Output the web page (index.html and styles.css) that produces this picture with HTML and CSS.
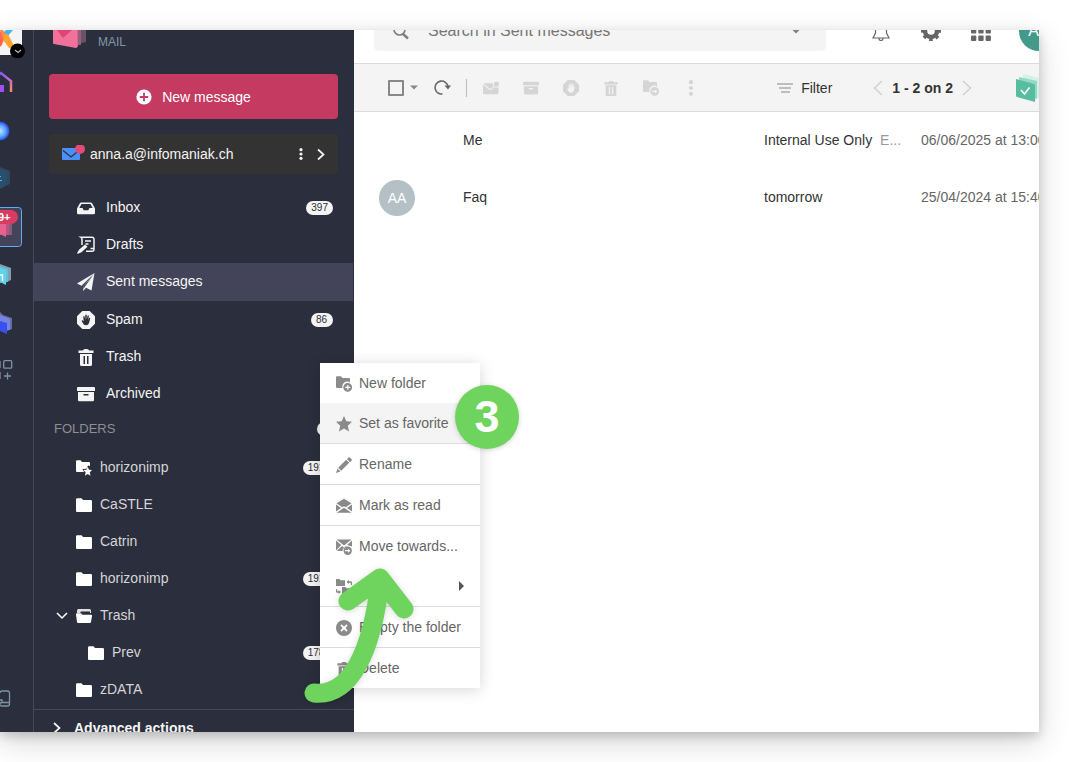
FILE: index.html
```html
<!DOCTYPE html>
<html lang="en">
<head>
<meta charset="utf-8">
<meta name="viewport" content="width=device-width, initial-scale=1">
<title>Mail - Sent messages</title>
<link rel="stylesheet" href="styles.css">
</head>
<body>
<svg class="sprite" aria-hidden="true">
  <symbol id="i-inbox" viewBox="0 0 18 18"><path fill-rule="evenodd" d="M4.200 3.500h9.600a1.500 1.500 0 0 1 1.300.8L18 9.500V14a1.300 1.300 0 0 1-1.300 1.300H1.300A1.300 1.300 0 0 1 0 14V9.500l2.900-5.200a1.500 1.500 0 0 1 1.300-.8zM4.500 5 2.300 9H5.500l1.200 2.200h4.600L12.500 9h3.200L13.500 5z"/></symbol>
  <symbol id="i-draft" viewBox="0 0 18 18"><path fill="none" stroke="currentColor" stroke-width="1.500" d="M5 9V3.500A2.500 2.500 0 0 0 3.800 1.200H15A2 2 0 0 1 17 3V13.500a1.800 1.800 0 0 1-1.800 1.800H9M17 12.500H13.500M8 5h6M8.500 8h3"/><path d="M8 8.500 10.500 10.800 4.500 16.200 1 17.800 0 17.200 2 13.800z"/></symbol>
  <symbol id="i-send" viewBox="0 0 18 18"><path d="M17.500 0 0 10.500l4.500 2.200zM17.500 0 6 13.500 6.300 18 9 14.800 14.500 17.500zM16 2.500 8 13.500l-1.600 2.500-.3-2.500z"/></symbol>
  <symbol id="i-spam" viewBox="0 0 18 18"><path d="M5.300 0h7.400L18 5.300v7.400L12.700 18H5.300L0 12.700V5.300z"/><path class="hand" d="M4.800 10.200c-.4-.8.500-1.400 1.100-.8l.8.900-.4-4.500c0-.9 1.100-1 1.300-.1l.6 3L8.300 4.300c0-1 1.300-1 1.400 0l.1 4.300.7-3.700c.2-.9 1.400-.7 1.300.2l-.5 4.200.8-2.200c.4-.8 1.300-.4 1.100.4l-1.100 4.300c-.5 1.700-1.600 2.500-3.200 2.500-1.500 0-2.400-.8-2.900-2z"/></symbol>
  <symbol id="i-trash" viewBox="0 0 18 18"><path fill-rule="evenodd" d="M6 2.500C6 .5 12 .5 12 2.500h4.500V5h-15V2.500zM3 6h12v10.500a1.500 1.500 0 0 1-1.500 1.500h-9A1.500 1.500 0 0 1 3 16.500zM6.500 8v8H8V8zM10 8v8h1.500V8z"/></symbol>
  <symbol id="i-archive" viewBox="0 0 18 18"><path fill-rule="evenodd" d="M1 2h16a1 1 0 0 1 1 1v3H0V3a1 1 0 0 1 1-1zM1 7h16v8a1.300 1.300 0 0 1-1.300 1.300H2.300A1.300 1.300 0 0 1 1 15zM6.500 9v1.500h5V9z"/></symbol>
  <symbol id="i-folder" viewBox="0 0 16 16"><path d="M0 2.500A1.300 1.300 0 0 1 1.300 1.200H5.500L7 3h7.800A1.200 1.200 0 0 1 16 4.200V14a1 1 0 0 1-1 1H1a1 1 0 0 1-1-1z"/></symbol>
  <symbol id="i-folder-star" viewBox="0 0 16 16"><path d="M0 1.200A1 1 0 0 1 1 .2h3.500L6 2h7a1 1 0 0 1 1 1v3L12 5.500 10.500 8.800 6.500 9 8 12H1a1 1 0 0 1-1-1z"/><path d="m11.700 6.800 1.300 3 3 .3-2.200 2.100.7 3.600-2.800-1.800L9 15.800l.6-3.600-2.300-2.100 3.100-.3z"/></symbol>
  <symbol id="i-folder-open" viewBox="0 0 16 16"><path opacity=".85" d="M1 5V2.500A1.500 1.500 0 0 1 2.500 1h11A1.500 1.500 0 0 1 15 2.500V5h-1V3.500H5L4 5z"/><path d="M0 6.500A1 1 0 0 1 1 5.300h4l1.500 1.400H15a1 1 0 0 1 1 1.200L15 14a1.200 1.200 0 0 1-1.200 1H2.200A1.200 1.200 0 0 1 1 14z"/></symbol>
  <symbol id="i-folder-plus" viewBox="0 0 16 16"><path fill-rule="evenodd" d="M0 1.200A1 1 0 0 1 1 .2h4L6.500 2H13a1 1 0 0 1 1 1v3.400A5 5 0 0 0 6.500 12H1a1 1 0 0 1-1-1zM11.700 7a4.300 4.300 0 1 1 0 8.800 4.300 4.300 0 0 1 0-8.800zM11.200 9v1.800H9.300v1.200h1.900v1.800h1.200V12h1.900v-1.200h-1.900V9z"/></symbol>
  <symbol id="i-folder-move" viewBox="0 0 16 16"><path fill-rule="evenodd" d="M0 1.200A1 1 0 0 1 1 .2h4L6.500 2H13a1 1 0 0 1 1 1v3.400A5 5 0 0 0 6.500 12H1a1 1 0 0 1-1-1zM11.700 7a4.300 4.300 0 1 1 0 8.800 4.300 4.300 0 0 1 0-8.800zM9 10.800V12h3v1.400l2.500-2L12 9.400v1.400z"/></symbol>
  <symbol id="i-mail-dot" viewBox="0 0 16 16"><path d="M0 4.500 6.500 10h1.300L11.300 7c1.200 1 2.900 1 4.200 0v6a1.300 1.300 0 0 1-1.300 1.300H1.300A1.300 1.300 0 0 1 0 13zM.3 3.300h9.500c-.2 1.200.1 2.100.8 3L7.200 9.200z"/><circle cx="13.500" cy="4.200" r="2.600"/></symbol>
  <symbol id="i-mail-move" viewBox="0 0 16 16"><path d="M.5.5h15L8 6.500zM0 1.500l5.200 4.600L0 11.500zM6 7l2 1.500L10 7l.8.700A5 5 0 0 0 6.500 12H.8zM11 6l5-4.500V7.500z"/><path fill-rule="evenodd" d="M11.700 7.500a4.200 4.200 0 1 1 0 8.400 4.200 4.200 0 0 1 0-8.400zM9 11v1.300h3v1.400l2.500-2L12 9.700V11z"/></symbol>
  <symbol id="i-mail-open" viewBox="0 0 16 16"><path d="M8 .8 15.500 5.300 9.800 9.200 8 8.200 6.200 9.200.5 5.300zM0 6.500l5 3.500-5 3.500zM16 6.500v7L11 10zM.5 14.800 8 9.800l7.500 5z"/></symbol>
  <symbol id="i-star" viewBox="0 0 16 16"><path d="m8 0 2.300 5.200 5.700.6-4.200 3.900L13 15.500 8 12.500l-5 3 1.200-5.800L0 5.800l5.700-.6z"/></symbol>
  <symbol id="i-pencil" viewBox="0 0 16 16"><path d="M10.200 2.800l3 3-8 8-3-3zM1.500 11.500l3 3L0 16z"/><path d="M12.200.8a1.500 1.500 0 0 1 2 0l1.200 1.200a1.500 1.500 0 0 1 0 2L14 5.200 11 2z"/></symbol>
  <symbol id="i-transfer" viewBox="0 0 16 16"><path d="M0 0h3.500l1 1.200H9V7H0zM6 8h3.500l1 1.200H15V15H6zM10.500 3 13 .8v1.500h2a1 1 0 0 1 1 1V6h-1.200V3.800H13V5zM5 13 2.500 15v-1.300H1a1 1 0 0 1-1-1V10h1.200v2.300h1.300V11z"/></symbol>
  <symbol id="i-cancel" viewBox="0 0 16 16"><circle cx="8" cy="8" r="8"/><path d="m5 5 6 6M11 5l-6 6" stroke="#fff" stroke-width="1.800"/></symbol>
  <symbol id="i-dots" viewBox="0 0 16 16"><circle cx="8" cy="2.200" r="2.100"/><circle cx="8" cy="8" r="2.100"/><circle cx="8" cy="13.800" r="2.100"/></symbol>
  <symbol id="i-caret" viewBox="0 0 8 5"><path d="M0 .5h8L4 4.500z"/></symbol>
  <symbol id="i-right" viewBox="0 0 10 12"><path d="m2 1 5.500 5L2 11" fill="none" stroke="currentColor" stroke-width="1.700"/></symbol>
</svg>

<div class="window">
  <nav class="rail" aria-label="Applications">
    <a class="rail-logo" href="#" aria-label="Workspace"><svg width="33" height="28" viewBox="0 0 33 28"><path fill="#f4f4f4" d="M0 0h22v25H0z"/><path fill="#45b5ee" d="M6 0h7L7 7 3 3z"/><path fill="#ff6a4d" d="M0 1 5 6 2 15 0 17z"/><path fill="#ff8a4a" d="M0 0h3l6 9-5 3z"/><path fill="#ffa52e" d="m4 5 4-1 7 14H9L4 11z"/><circle cx="17.500" cy="21" r="7.500" fill="#000"/><path d="m15 20 3 2.500 3-2.500" fill="none" stroke="#bbb" stroke-width="1.200"/></svg></a>
    <a class="rail-item" href="#" aria-label="Home"><svg width="33" height="48" viewBox="0 0 33 48"><defs><linearGradient id="gh" x1="0" x2="1" y1="0" y2="1"><stop stop-color="#6a4dff"/><stop offset=".5" stop-color="#a860f0"/><stop offset="1" stop-color="#ff8a5c"/></linearGradient></defs><path fill="none" stroke="url(#gh)" stroke-width="2.500" d="M-8 22 1 15l10 8v11"/><path fill="#a24df5" d="M0 27h4v7H0z"/></svg></a>
    <a class="rail-item" href="#" aria-label="Assistant"><svg width="33" height="48" viewBox="0 0 33 48"><defs><radialGradient id="gs"><stop stop-color="#bfe4ff"/><stop offset=".6" stop-color="#5aa5ff"/><stop offset="1" stop-color="#2746e0"/></radialGradient></defs><circle cx="0" cy="25" r="9.500" fill="url(#gs)"/></svg></a>
    <a class="rail-item" href="#" aria-label="Hosting"><svg width="33" height="48" viewBox="0 0 33 48"><path fill="#31475d" d="m0 13 10 4v13L0 35z"/><path fill="#26516e" d="m0 15 7 3v12l-7 4z"/><path fill="#8ba0b0" d="M0 22h1v1H0zM0 26h2v1H0z"/></svg></a>
    <a class="rail-item" href="#" aria-label="Mail"><svg width="33" height="48" viewBox="0 0 33 48"><rect x="-10" y="5.500" width="31.500" height="39" rx="3" fill="#434459" stroke="#64aaf5"/><path fill="#8a5a78" d="m0 18 12 3v12H0z"/><path fill="#b8557e" d="M0 18h9v15H0z"/><path fill="#e8628f" d="M0 22h6v13l-6-3z"/><rect x="-10" y="8" width="28" height="14" rx="7" fill="#d83c63"/><text x="-2" y="19" class="rail-count">9+</text></svg></a>
    <a class="rail-item" href="#" aria-label="Calendar"><svg width="33" height="48" viewBox="0 0 33 48"><path fill="#7f9fae" d="m0 14 11 4v12l-6 3H0z"/><path fill="#65bfd8" d="m0 16 8 3v13H0z"/><path fill="#62d2ee" d="m0 18 6 2v15l-6-3z"/><path d="M0 25h2.500v6" stroke="#fff" stroke-width="1.300" fill="none"/></svg></a>
    <a class="rail-item" href="#" aria-label="Drive"><svg width="33" height="48" viewBox="0 0 33 48"><path fill="#666e9e" d="m0 14 3 3 9 3v11l-5 2H0z"/><path fill="#7284e4" d="m0 17 10 4v11H0z"/><path fill="#3a50ee" d="m0 23 7 2v11l-7-3z"/></svg></a>
    <a class="rail-item" href="#" aria-label="All applications"><svg width="33" height="48" viewBox="0 0 33 48"><g fill="none" stroke="#7e93a3" stroke-width="1.300"><rect x="3.700" y="14.700" width="8" height="7.500" rx="1"/><path d="M0 15v7M0 26v7M7.500 26.500v7M4 30h7"/></g></svg></a>
    <a class="rail-bottom" href="#" aria-label="Documentation"><svg width="33" height="18" viewBox="0 0 33 18"><path fill="none" stroke="#7e93a3" stroke-width="1.300" d="M0 3a2 2 0 0 1 2-2h5.500a2 2 0 0 1 2 2v11a2 2 0 0 1-2 2H2c-3 0-3-3.500 0-3.500h7.500M0 10h2v3"/></svg></a>
  </nav>

  <aside class="sidebar">
    <header class="brand">
      <svg width="36" height="20" viewBox="0 0 36 20"><path fill="#665467" d="M20 0h14v12l-9 2z"/><path fill="#a05a7a" d="M20 0h9v15h-7z"/><path fill="#c86b8e" d="M20 0h6v17h-5z"/><path fill="#f0729b" d="M1 0h24v17q0 1-1 1L2 14q-1 0-1-1z"/><path fill="#dd4674" d="M5 0h15l-9 8z"/></svg>
      <span>MAIL</span>
    </header>
    <button class="compose" type="button"><svg width="16" height="16" viewBox="0 0 16 16"><circle cx="8" cy="8" r="7.600" fill="#fff"/><path d="M8 3.800v8.400M3.800 8h8.400" stroke="#c53a60" stroke-width="1.800"/></svg>New message</button>
    <div class="account">
      <svg width="24" height="18" viewBox="0 0 24 18"><path fill="#4a90ff" d="M1 4a1 1 0 0 1 1-1h16a1 1 0 0 1 1 1v10a1 1 0 0 1-1 1H2a1 1 0 0 1-1-1z"/><path d="m2 5.500 8 6.500 8-6.500" fill="none" stroke="#333" stroke-width="1.300"/><circle cx="19" cy="4" r="5" fill="#e24a78"/></svg>
      <span class="address">anna.a@infomaniak.ch</span>
      <button type="button" aria-label="Account options"><svg width="12" height="12"><use href="#i-dots"/></svg></button>
      <button type="button" aria-label="Switch account"><svg width="10" height="13"><use href="#i-right"/></svg></button>
    </div>
    <ul class="folders">
      <li><a href="#"><svg><use href="#i-inbox"/></svg>Inbox<span class="count">397</span></a></li>
      <li><a href="#"><svg><use href="#i-draft"/></svg>Drafts</a></li>
      <li class="current"><a href="#"><svg><use href="#i-send"/></svg>Sent messages</a></li>
      <li><a href="#"><svg><use href="#i-spam"/></svg>Spam<span class="count">86</span></a></li>
      <li><a href="#"><svg><use href="#i-trash"/></svg>Trash</a></li>
      <li><a href="#"><svg><use href="#i-archive"/></svg>Archived</a></li>
    </ul>
    <h2 class="section">FOLDERS<span class="count">8</span></h2>
    <ul class="folders custom">
      <li><a href="#"><svg><use href="#i-folder-star"/></svg>horizonimp<span class="count">1917</span></a></li>
      <li><a href="#"><svg><use href="#i-folder"/></svg>CaSTLE</a></li>
      <li><a href="#"><svg><use href="#i-folder"/></svg>Catrin</a></li>
      <li><a href="#"><svg><use href="#i-folder"/></svg>horizonimp<span class="count">1917</span></a></li>
      <li class="open"><a href="#"><svg class="chevron" viewBox="0 0 12 8"><path d="m1 1 5 5 5-5" fill="none" stroke="currentColor" stroke-width="1.500"/></svg><svg><use href="#i-folder-open"/></svg>Trash</a></li>
      <li class="nested"><a href="#"><svg><use href="#i-folder"/></svg>Prev<span class="count">1786</span></a></li>
      <li><a href="#"><svg><use href="#i-folder"/></svg>zDATA</a></li>
    </ul>
    <button class="advanced" type="button"><svg width="10" height="12"><use href="#i-right"/></svg>Advanced actions</button>
  </aside>

  <main class="main">
    <header class="topbar">
      <div class="search">
        <svg width="18" height="18" viewBox="0 0 18 18"><circle cx="7.500" cy="7.500" r="5.500" fill="none" stroke="currentColor" stroke-width="1.700"/><path d="m11 12 5 4.500" stroke="currentColor" stroke-width="2.500"/></svg>
        <input type="text" placeholder="Search in Sent messages" aria-label="Search in Sent messages">
        <svg class="search-caret" width="8" height="5"><use href="#i-caret"/></svg>
      </div>
      <div class="tools">
        <button type="button" aria-label="Notifications"><svg width="20" height="20" viewBox="0 0 20 20"><path fill="none" stroke="currentColor" stroke-width="1.200" d="M4.500 7a5.500 5.500 0 0 1 11 0v5l2.500 5H2l2.500-5zM8 17.500a2 2 0 0 0 4 0"/></svg></button>
        <button type="button" aria-label="Settings"><svg width="20" height="20" viewBox="0 0 20 20"><circle cx="10" cy="10" r="6" fill="none" stroke="currentColor" stroke-width="4.500"/><circle cx="10" cy="10" r="8.800" fill="none" stroke="currentColor" stroke-width="2.400" stroke-dasharray="3.700 3.210" stroke-dashoffset="1.850"/></svg></button>
        <button type="button" aria-label="Applications"><svg width="20" height="20" viewBox="0 0 20 20"><rect width="5.300" height="5.300" rx="1"/><rect x="7.300" width="5.300" height="5.300" rx="1"/><rect x="14.600" width="5.300" height="5.300" rx="1"/><rect y="7.300" width="5.300" height="5.300" rx="1"/><rect x="7.300" y="7.300" width="5.300" height="5.300" rx="1"/><rect x="14.600" y="7.300" width="5.300" height="5.300" rx="1"/><rect y="14.600" width="5.300" height="5.300" rx="1"/><rect x="7.300" y="14.600" width="5.300" height="5.300" rx="1"/><rect x="14.600" y="14.600" width="5.300" height="5.300" rx="1"/></svg></button>
      </div>
      <span class="profile">AA</span>
    </header>

    <div class="toolbar">
      <label class="select-all"><input type="checkbox" aria-label="Select all"><svg width="8" height="5"><use href="#i-caret"/></svg></label>
      <button class="refresh" type="button" aria-label="Refresh"><svg width="17" height="17" viewBox="0 0 17 17"><path fill="none" stroke="#666" stroke-width="1.600" d="M8.500 15a6.500 6.500 0 1 1 5.500-7.500"/><path fill="#666" d="M10.500 6.500H17L14 10.500z"/></svg></button>
      <div class="actions">
        <button type="button" aria-label="Mark as unread"><svg><use href="#i-mail-dot"/></svg></button>
        <button type="button" aria-label="Archive"><svg><use href="#i-archive"/></svg></button>
        <button type="button" aria-label="Spam"><svg><use href="#i-spam"/></svg></button>
        <button type="button" aria-label="Delete"><svg><use href="#i-trash"/></svg></button>
        <button type="button" aria-label="Move"><svg><use href="#i-folder-move"/></svg></button>
        <button type="button" aria-label="More"><svg><use href="#i-dots"/></svg></button>
      </div>
      <button class="filter" type="button"><svg width="16" height="10" viewBox="0 0 16 10"><path stroke="#aaa" stroke-width="1.600" d="M0 1h16M2 5h12M4 9h9"/></svg>Filter</button>
      <div class="pager">
        <button type="button" aria-label="Previous"><svg width="10" height="16" viewBox="0 0 10 16"><path d="M9 1 1.500 8 9 15" fill="none" stroke="#d2d2d2" stroke-width="1.700"/></svg></button>
        <span>1 - 2 on 2</span>
        <button type="button" aria-label="Next"><svg width="10" height="16" viewBox="0 0 10 16"><path d="m1 1 7.500 7L1 15" fill="none" stroke="#d2d2d2" stroke-width="1.700"/></svg></button>
      </div>
      <button class="tasks" type="button" aria-label="Tasks"><svg width="24" height="30" viewBox="0 0 24 30"><path fill="#d5f0e8" d="m8 1 16 4v20L8 20z"/><path fill="#93d9c3" d="m4 4 18 4v18L4 21z"/><path fill="#58bd9f" d="m1 6 18 5q1 .3 1 1.500V29L2 24q-1-.3-1-1.500z"/><path d="m6 17 3.500 4 5-6.500" fill="none" stroke="#fff" stroke-width="1.700"/></svg></button>
    </div>

    <table class="messages">
      <colgroup><col class="c-avatar"><col><col class="c-subject"><col class="c-date"></colgroup>
      <tbody>
        <tr><td></td><td>Me</td><td>Internal Use Only <span class="preview">E...</span></td><td class="date">06/06/2025 at 13:00</td></tr>
        <tr><td class="who"><span class="avatar">AA</span></td><td>Faq</td><td>tomorrow</td><td class="date">25/04/2024 at 15:40</td></tr>
      </tbody>
    </table>
  </main>
</div>

<div class="menu" role="menu">
  <button type="button" role="menuitem"><svg><use href="#i-folder-plus"/></svg>New folder</button>
  <button class="hover ruled" type="button" role="menuitem"><svg><use href="#i-star"/></svg>Set as favorite</button>
  <button class="ruled" type="button" role="menuitem"><svg><use href="#i-pencil"/></svg>Rename</button>
  <button class="ruled" type="button" role="menuitem"><svg><use href="#i-mail-open"/></svg>Mark as read</button>
  <button type="button" role="menuitem"><svg><use href="#i-mail-move"/></svg>Move towards...</button>
  <button class="ruled" type="button" role="menuitem"><svg><use href="#i-transfer"/></svg>Share<svg class="submenu" viewBox="0 0 5 10"><path d="M0 0 5 5 0 10z"/></svg></button>
  <button class="ruled" type="button" role="menuitem"><svg><use href="#i-cancel"/></svg>Empty the folder</button>
  <button type="button" role="menuitem"><svg><use href="#i-trash"/></svg>Delete</button>
</div>
<svg class="arrow" viewBox="300 564 118 144" aria-hidden="true"><path d="M314 693C351 697 372 650 380 582M348 601 380 578 404 609" fill="none" stroke="#6fd45e" stroke-width="19" stroke-linecap="round" stroke-linejoin="round"/><path fill="#6fd45e" d="m380 578-16 20 26 3z"/></svg>
<div class="step">3</div>
</body>
</html>
```
FILE: styles.css
```css
* { box-sizing: border-box; }

body {
  margin: 0;
  padding: 30px 30px 30px 0;
  min-height: 100vh;
  background: #fff;
  color: #333;
  font: 14px/20px "Liberation Sans", Arial, sans-serif;
  overflow: hidden;
}

button {
  display: flex;
  align-items: center;
  padding: 0;
  border: 0;
  background: none;
  color: inherit;
  font: inherit;
  text-align: left;
}

a { color: inherit; text-decoration: none; }
svg { display: block; flex: none; fill: currentColor; }
.sprite { position: absolute; width: 0; height: 0; }

.window {
  display: flex;
  height: calc(100vh - 60px);
  overflow: hidden;
  background: #fff;
  box-shadow: 0 10px 30px rgba(0, 0, 0, .16), 0 4px 10px rgba(0, 0, 0, .18);
}

/* Application rail */
.rail {
  display: flex;
  flex-direction: column;
  flex: 0 0 34px;
  border-right: 1px solid #464959;
  background: #2b2e3c;
}
.rail-bottom { margin-top: auto; padding-bottom: 24px; }
.rail-count { fill: #fff; font-size: 11px; font-weight: bold; }

/* Sidebar */
.sidebar {
  --hand: #2b2e3c;
  display: flex;
  flex-direction: column;
  flex: 0 0 320px;
  overflow: hidden;
  background: #2b2e3c;
  color: #f4f4f4;
}
.brand {
  display: flex;
  flex: 0 0 44px;
  align-items: flex-start;
  gap: 10px;
  padding-left: 18px;
  color: #8297a8;
  font-size: 12px;
  line-height: 24px;
}
.compose {
  flex: 0 0 45px;
  justify-content: center;
  gap: 10px;
  margin: 0 16px 15px 15px;
  border-radius: 4px;
  background: #c53a60;
  color: #fff;
}
.account {
  display: flex;
  flex: 0 0 40px;
  align-items: center;
  gap: 5px;
  margin: 0 16px 15px 15px;
  padding: 0 12px;
  border-radius: 4px;
  background: #333;
}
.address { flex: 1; }
.account button + button { margin-left: 4px; }

.folders { flex: none; margin: 0; padding: 0; list-style: none; }
.folders a {
  display: flex;
  align-items: center;
  gap: 11px;
  height: 37px;
  padding: 0 21px 2px 43px;
}
.folders svg { width: 18px; height: 18px; margin-top: 2px; }
.folders .current { margin-right: 1px; background: #434459; }
.folders .current a { height: 38px; }
.hand { fill: var(--hand); }
.custom { color: #d5d5d8; }
.custom a { gap: 8px; padding-left: 42px; }
.custom svg { width: 16px; height: 16px; color: #fff; }
.custom .chevron { width: 12px; height: 8px; }
.open a { padding-left: 22px; }
.nested a { padding-left: 54px; }
.count {
  min-width: 16px;
  margin: 2px 0 0 auto;
  padding: 0 5px;
  border-radius: 7px;
  background: #f4f4f4;
  color: #2b2e3c;
  font-size: 10px;
  line-height: 14px;
}
.folders .count { min-width: 22px; }
.custom .count { padding-right: 3px; }
.section {
  display: flex;
  flex: 0 0 37px;
  align-items: center;
  margin: 0;
  padding: 0 21px 3px 20px;
  color: #8f8f92;
  font-size: 13px;
  font-weight: normal;
}
.section .count { margin-top: 0; }
.advanced {
  flex: 0 0 36px;
  gap: 12px;
  margin-top: 1px;
  padding-left: 18px;
  border-top: 1px solid #464959;
  font-weight: bold;
}

/* Main column */
.main { --hand: #f4f4f4; flex: 1; min-width: 0; overflow: hidden; }
.topbar {
  display: flex;
  align-items: flex-end;
  height: 34px;
  padding: 0 0 12px 20px;
  overflow: hidden;
  border-bottom: 1px solid #dcdcdc;
}
.search {
  display: flex;
  flex: 1;
  align-items: center;
  gap: 18px;
  height: 40px;
  padding: 0 26px 0 18px;
  border-radius: 5px;
  background: #f4f4f4;
  color: #808080;
}
.search input {
  flex: 1;
  min-width: 0;
  padding: 0;
  border: 0;
  outline: 0;
  background: none;
  font: 16px/20px "Liberation Sans", Arial, sans-serif;
}
.search input::placeholder { color: #757575; opacity: 1; }
.tools {
  display: flex;
  align-items: center;
  gap: 30px;
  height: 40px;
  padding: 0 28px 0 45px;
  color: #666;
}
.profile {
  flex: none;
  width: 40px;
  height: 40px;
  margin-right: -20px;
  border-radius: 50%;
  background: #43998a;
  color: #fff;
  font-size: 16px;
  line-height: 40px;
  text-align: center;
}

.toolbar {
  display: flex;
  align-items: center;
  height: 48px;
  padding-left: 34px;
  border-bottom: 1px solid #dcdcdc;
  background: #f4f4f4;
}
.select-all { display: flex; align-items: center; gap: 6px; color: #888; }
.select-all input {
  appearance: none;
  width: 16px;
  height: 16px;
  margin: 0;
  border: 2px solid #888;
  border-radius: 1px;
}
.refresh { margin: 0 15px 0 16px; }
.actions {
  display: flex;
  gap: 24px;
  padding-left: 16px;
  border-left: 1px solid #bbb;
  color: #d5d5d5;
}
.actions svg { width: 16px; height: 18px; }
.filter { gap: 8px; margin-left: auto; }
.pager { display: flex; align-items: center; gap: 9px; margin: 0 43px 0 41px; font-weight: bold; }

.messages { width: 100%; border-collapse: collapse; table-layout: fixed; }
.c-avatar { width: 109px; }
.c-subject { width: 157px; }
.c-date { width: 118px; }
.messages td { height: 57px; padding: 0 0 2px; overflow: hidden; white-space: nowrap; }
.messages .who { padding: 0 0 0 25px; }
.messages .date { color: #666; }
.preview { padding-left: 4px; color: #999; }
.avatar {
  display: block;
  width: 36px;
  height: 36px;
  border-radius: 50%;
  background: #b4bfc6;
  color: #fff;
  line-height: 36px;
  text-align: center;
}

/* Folder context menu */
.menu {
  position: absolute;
  top: 363px;
  left: 320px;
  width: 160px;
  background: #fff;
  box-shadow: 0 2px 14px rgba(0, 0, 0, .16);
  color: #666;
}
.menu button {
  gap: 7px;
  width: 100%;
  height: 40px;
  padding: 0 16px;
  white-space: nowrap;
}
.menu .ruled { height: 41px; border-bottom: 1px solid #dcdcdc; }
.menu .hover { background: #f4f4f4; }
.menu svg { width: 16px; height: 16px; margin-top: 2px; color: #8a8a8a; }
.menu .submenu { width: 5px; height: 10px; margin: 0 0 0 auto; color: #555; }

/* Walkthrough markers */
.arrow {
  position: absolute;
  top: 564px;
  left: 300px;
  width: 118px;
  height: 144px;
  filter: drop-shadow(0 1px 3px rgba(0, 0, 0, .15));
}
.step {
  position: absolute;
  top: 385px;
  left: 455px;
  width: 64px;
  height: 64px;
  border-radius: 50%;
  background: #6fd45e;
  box-shadow: 0 1px 5px rgba(0, 0, 0, .18);
  color: #fff;
  font-size: 45px;
  font-weight: bold;
  line-height: 64px;
  text-align: center;
}
```
